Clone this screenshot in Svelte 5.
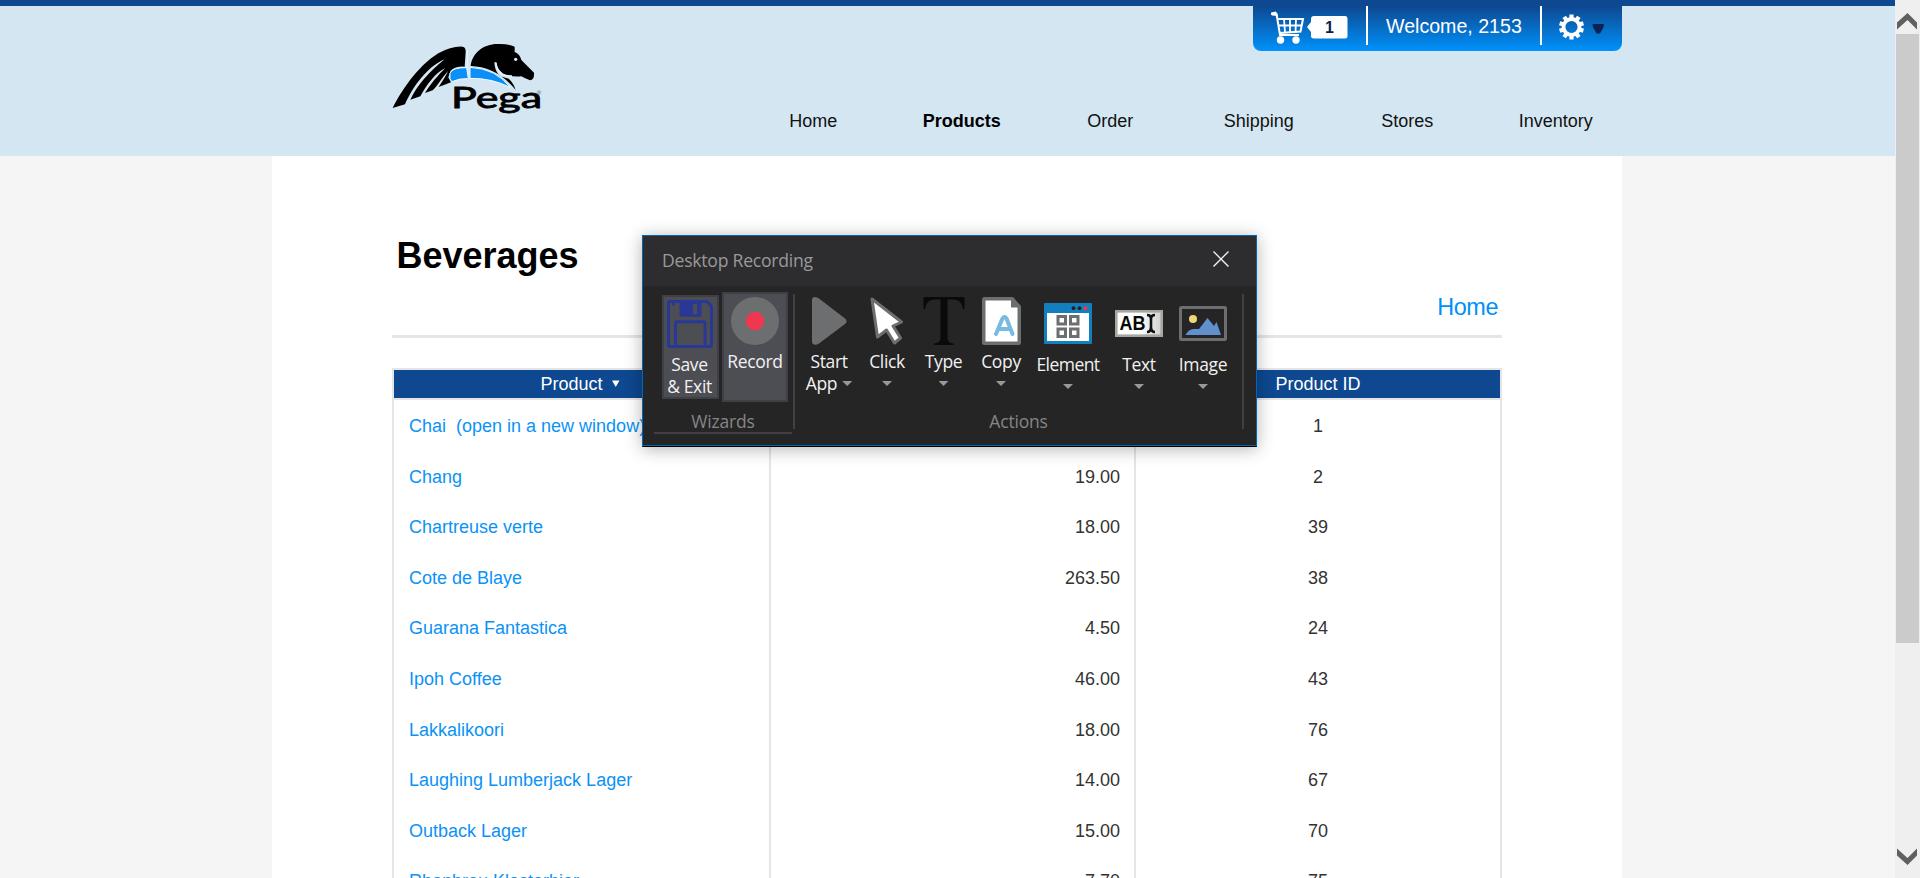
<script>
  const nav = ['Home', 'Products', 'Order', 'Shipping', 'Stores', 'Inventory'];
  const products = [
    ['Chai\u00a0 (open in a new window)', '18.00', '1'],
    ['Chang', '19.00', '2'],
    ['Chartreuse verte', '18.00', '39'],
    ['Cote de Blaye', '263.50', '38'],
    ['Guarana Fantastica', '4.50', '24'],
    ['Ipoh Coffee', '46.00', '43'],
    ['Lakkalikoori', '18.00', '76'],
    ['Laughing Lumberjack Lager', '14.00', '67'],
    ['Outback Lager', '15.00', '70'],
    ['Rhonbrau Klosterbier', '7.70', '75']
  ];
  const teeth = [0, 36, 72, 108, 144, 180, 216, 252, 288, 324];
</script>

<div class="screen">
  <div class="page">
    <header>
      <div class="inner">
        <div class="brand">
          <svg class="logo" width="180" height="100" viewBox="0 0 540 300">
            <path d="M38 234C60 190 110 110 175 70Q215 48 248 50Q258 52 257 66L254 110Q228 108 212 122L205 142L213 157L176 171C184 158 196 142 204 124C188 140 170 172 158 181L135 189C150 164 175 134 196 114C164 130 140 165 121 199L91 209C110 168 150 122 194 88C140 112 100 168 75 223Z" />
            <path d="M272 108C276 70 310 42 352 42Q385 41 404 50L404 66Q420 72 424 90L462 128Q464 148 450 151Q436 146 424 139Q396 142 370 131Q352 120 348 97L343 97Q344 122 358 136Q370 144 386 146Q400 158 407 180Q350 110 272 108Z" />
            <path d="M348 98Q350 122 366 132Q376 138 396 138" fill="none" stroke="#e8f3fa" stroke-width="4" />
            <path d="M262 60V144" stroke="#e8f3fa" stroke-width="4" />
            <path d="M210 130Q216 112 260 113L265 146Q240 144 215 155Q207 148 210 130ZM270 112Q350 116 390 172Q335 144 270 145Z" fill="#0b90f8" stroke="#f4fbff" stroke-width="3" />
            <circle cx="407" cy="88" r="5" fill="#d4e6f2" />
            <text x="213" y="234" textLength="273" lengthAdjust="spacingAndGlyphs" font-family="Lato, sans-serif" font-size="86" stroke="#000" stroke-width="2.500">Pega</text>
            <text x="470" y="195" font-family="Liberation Sans, sans-serif" font-size="18" fill="#555">®</text>
          </svg>
        </div>
        <div class="right">
          <div class="account">
            <div class="cart">
              <svg width="80" height="36" viewBox="0 0 80 36">
                <g fill="none" stroke="#fff" stroke-width="2">
                  <path d="M0 4H5.5L9 25H28M6.5 9H32L29.5 21.5L9 23" />
                  <path d="M13 9L14 22M19 9V22M25 9L24.500 22M7.500 15.500H30.500" stroke-width="1.800" />
                </g>
                <path d="M0 2.500L5 1.500L7 6L1 5.500Z" fill="#fff" />
                <circle cx="9.500" cy="30" r="3.700" fill="#fff" /><circle cx="25" cy="30" r="3.700" fill="#fff" />
                <path d="M36 17L40 12V9Q40 6 43 6H74Q76.500 6 76.500 9V26Q76.500 28.500 74 28.500H43Q40 28.500 40 26V22Z" fill="#fff" />
                <text x="54" y="22.700" font-family="Liberation Sans, sans-serif" font-size="16" font-weight="700" fill="#0b1f48">1</text>
              </svg>
            </div>
            <div class="welcome">Welcome, 2153</div>
            <div class="settings">
              <svg width="52" height="36" viewBox="0 0 52 36">
                <circle cx="16.500" cy="17" r="8" fill="none" stroke="#fff" stroke-width="3.800" />
                {#each teeth as a}
                  <path d="M14.400 8V4.500H18.600V8Z" fill="#fff" transform="rotate({a} 16.500 17)" />
                {/each}
                <path d="M37.500 14H49L48.500 17L45 23.500H41.500L38 17Z" fill="#0b2354" />
              </svg>
            </div>
          </div>
          <nav>
            {#each nav as item}
              <a href="#top" class:active={item === 'Products'}>{item}</a>
            {/each}
          </nav>
        </div>
      </div>
    </header>

    <main>
      <h1>Beverages</h1>
      <div class="crumb"><a href="#top">Home</a></div>
      <div class="table">
        <div class="row head">
          <span>Product <svg width="8" height="7" viewBox="0 0 8 7"><path d="M0 .5H7.500L3.750 7Z" fill="#fff" /></svg></span>
          <span>Unit Price</span>
          <span>Product ID</span>
        </div>
        {#each products as [name, price, id]}
          <div class="row">
            <span class="name"><a href="#top">{name}</a></span>
            <span class="price">{price}</span>
            <span class="id">{id}</span>
          </div>
        {/each}
      </div>
    </main>
  </div>

  <div class="scrollbar">
    <svg width="25" height="34" viewBox="0 0 25 34"><path d="M2 22.500L12.500 13L22 22.500V29.500L12.500 20L2 29.500Z" fill="#606060" /></svg>
    <div class="thumb"></div>
    <svg class="down" width="25" height="34" viewBox="0 0 25 34"><path d="M2 4.500L12.500 14L22 4.500V11.500L12.500 21L2 11.500Z" fill="#606060" /></svg>
  </div>

  <section class="dialog">
    <div class="title">
      <span>Desktop Recording</span>
      <svg width="16" height="16" viewBox="0 0 16 16"><path d="M.5 .5L15.500 15.500M15.500 .5L.5 15.500" stroke="#f1f1f1" stroke-width="1.400" /></svg>
    </div>
    <div class="groups">
      <div class="wizards">
        <div class="buttons">
          <div class="btn save">
            <svg width="46" height="48" viewBox="1 0.500 46 48.500" preserveAspectRatio="none">
              <path d="M3 2H41L45.500 7V46.500Q45.500 47.500 44 47.500H4Q2.500 47.500 2.500 46.500V3Q2.500 2 4 2Z" fill="none" stroke="#293895" stroke-width="3" />
              <path d="M13.500 1H35.500V17.500H13.500ZM27 4.500V15H31V4.500Z" fill="#293895" fill-rule="evenodd" />
              <path d="M9.500 47V24Q9.500 22.500 11 22.500H37.500Q39 22.500 39 24V47" fill="none" stroke="#293895" stroke-width="3" />
              <circle cx="7.500" cy="4.500" r="1.700" fill="#293895" />
            </svg>
            <b>Save<br />&amp; Exit</b>
          </div>
          <div class="btn record">
            <svg width="48" height="48" viewBox="0 0 48 48"><circle cx="24" cy="24" r="24" fill="#6d6e70" /><circle cx="24" cy="24" r="9.200" fill="#ef3850" /></svg>
            <b>Record</b>
          </div>
        </div>
        <div class="caption">Wizards</div>
      </div>
      <div class="actions">
        <div class="tools">
          <div class="tool start">
            <svg width="35" height="48" viewBox="0 0 35 48"><path d="M0 3Q0 0 3 0Q5 0 7 1.500L33 21.500Q36 24 33 27L7 46.500Q4 48.500 2 47.500Q0 46.500 0 45Z" fill="#6d6e70" /></svg>
            <b>Start<br />App<i></i></b>
          </div>
          <div class="tool click">
            <svg width="34" height="48" viewBox="0 0 34 48"><path d="M2 2L31.500 25L23 29L30.500 41L24.500 46L16.500 33L7.500 40Z" fill="#fff" stroke="#6d6e70" stroke-width="3" stroke-linejoin="round" /></svg>
            <b>Click</b><i></i>
          </div>
          <div class="tool type">
            <svg width="42" height="48" viewBox="0 0 42 48"><path d="M.5 0H41.500V12H40Q39 3 31 2.500H24.500V41Q24.500 46 30.500 46.500V48H11V46.500Q17.500 46 17.500 41V2.500H11Q3 3 2 12H.5Z" fill="#090b0b" /></svg>
            <b>Type</b><i></i>
          </div>
          <div class="tool copy">
            <svg width="39" height="48" viewBox="0 0 39 48"><path d="M2.500 0H31L39 9V45.500Q39 48 36.500 48H2.500Q0 48 0 45.500V2.500Q0 0 2.500 0Z" fill="#6d6e70" /><path d="M3.500 3.500H29V10.500H35.500V44.500H3.500Z" fill="#fff" /><path d="M14 37L20.500 21.500Q22.500 18.500 24.500 21.500L30.500 37M17.500 32H27.500" fill="none" stroke="#77bbe2" stroke-width="4" stroke-linecap="round" /></svg>
            <b>Copy</b><i></i>
          </div>
          <div class="tool low element">
            <svg width="48" height="41" viewBox="0 0 48 41"><rect width="48" height="41" rx="1" fill="#1380bd" /><path d="M3 10H45V38H3Z" fill="#fff" /><circle cx="29.500" cy="5.200" r="1.900" fill="#222" /><circle cx="35.500" cy="5.200" r="1.900" fill="#222" /><circle cx="41.500" cy="5.200" r="2" fill="#ef3850" /><path d="M14 13.500H21.500V21H14ZM26.500 13.500H34V21H26.500ZM14 26H21.500V33.500H14ZM26.500 26H34V33.500H26.500Z" fill="none" stroke="#6d6e70" stroke-width="3" /></svg>
            <b>Element</b><i></i>
          </div>
          <div class="tool low text">
            <svg width="48" height="41" viewBox="0 0 48 41"><defs><linearGradient id="field"><stop offset=".5" stop-color="#fff" /><stop offset="1" stop-color="#d0d0d0" /></linearGradient></defs><rect x="1.300" y="8.300" width="45.400" height="24.400" fill="url(#field)" stroke="#a6a79e" stroke-width="2.600" /><text x="4.500" y="27" textLength="26" lengthAdjust="spacingAndGlyphs" font-family="Liberation Sans, sans-serif" font-size="20" font-weight="700" fill="#080808">AB</text><path d="M32 12Q36 12 36 16V24Q36 29 32 29M40 12Q36 12 36 16M36 24Q36 29 40 29" fill="none" stroke="#111" stroke-width="2.600" /></svg>
            <b>Text</b><i></i>
          </div>
          <div class="tool low image">
            <svg width="48" height="41" viewBox="0 0 48 41"><rect x="1.500" y="4.500" width="45" height="32" rx="1" fill="#252526" stroke="#6d6e70" stroke-width="3" /><circle cx="14" cy="16" r="4" fill="#efd677" /><path d="M6.500 32Q10 25.500 15 26L20 26L28.500 15L35 23L37.500 19L42 32Z" fill="#6190cf" /></svg>
            <b>Image</b><i></i>
          </div>
        </div>
        <div class="caption">Actions</div>
      </div>
    </div>
  </section>
</div>

<style>
  :global(body) { margin: 0; overflow: hidden; }
  .screen { position: relative; display: flex; width: 1920px; height: 878px; overflow: hidden; background: #f5f5f5; font-family: "Liberation Sans", Arial, sans-serif; font-size: 18px; }
  .screen * { box-sizing: border-box; }
  svg { display: block; flex: none; }
  a { color: inherit; text-decoration: none; }
  .page { width: 1895px; height: 878px; overflow: hidden; }
  header { height: 156px; background: #d4e6f2; border-top: 6px solid #0d4890; }
  .inner { display: flex; width: 1358px; margin-left: 272px; }
  .brand { width: 467px; padding: 24px 0 0 108px; }
  .right { width: 891px; }
  .account { display: flex; width: 369px; height: 45px; margin-left: 514px; border-radius: 0 0 8px 8px; background: linear-gradient(#0d4890, #0092fb); color: #fff; }
  .cart { width: 115px; height: 39px; padding: 4px 0 0 18px; border-right: 2px solid #fff; }
  .welcome { width: 174px; height: 39px; padding-left: 18px; border-right: 2px solid #fff; font-size: 19.600px; line-height: 40px; white-space: nowrap; }
  .settings { padding: 4px 0 0 13px; }
  nav { display: grid; grid-template-columns: repeat(6, 148.500px); margin-top: 60px; text-align: center; line-height: 21px; color: #111; }
  .active { font-weight: 700; color: #000; }
  main { width: 1350px; height: 722px; margin-left: 272px; padding: 79px 120px 0; background: #fff; overflow: hidden; }
  h1 { margin: 0; padding-left: 4.500px; font-size: 36px; line-height: 41px; }
  .crumb { height: 62px; padding: 17px 4px 0 0; border-bottom: 3px solid #e5e5e5; text-align: right; color: #0090f8; font-size: 23.400px; letter-spacing: -.4px; line-height: 28px; }
  .table { margin-top: 30px; border: 2px solid #e5e5e5; }
  .row { display: grid; grid-template-columns: 375px 365px 366px; height: 50.600px; color: #333; line-height: 52px; }
  .row span + span { border-left: 2px solid #e5e5e5; }
  .row span { height: 50.600px; }
  .row.head { height: 30px; border-bottom: 2px solid #e5e5e5; background: #0d4890; color: #fff; line-height: 28px; text-align: center; }
  .row.head span { height: 28px; }
  .row.head span:first-child { padding-right: 3px; }
  .row.head span + span { border-color: #0d4890; }
  .head svg { display: inline-block; margin: 0 0 3px 4px; }
  .name { padding-left: 15px; color: #0b92f6; white-space: pre; }
  .price { padding-right: 14px; text-align: right; }
  .id { text-align: center; }
  .scrollbar { display: flex; flex-direction: column; width: 25px; height: 878px; background: #efefef; }
  .thumb { width: 23px; height: 609px; margin-left: 1px; background: #cbcbcb; }
  .down { margin-top: auto; }
  .dialog { position: absolute; left: 642px; top: 235px; width: 615px; height: 212px; border: 1px solid #0067b0; border-bottom-color: #000; background: #252526; box-shadow: 0 2px 16px rgba(0, 0, 0, .3), inset 0 -1px #0067b0; font-family: "Open Sans", "Noto Sans", sans-serif; color: #f1f1f1; }
  .title { display: flex; justify-content: space-between; height: 50px; padding: 15px 27px 0 19px; background: #2d2d30; color: #999; font-size: 17.600px; line-height: 19px; letter-spacing: -.24px; }
  .groups { display: flex; padding-top: 6px; }
  .wizards { width: 152px; height: 143px; border-right: 2px solid transparent; border-image: linear-gradient(transparent 3px, #3f3f46 3px, #3f3f46 136px, transparent 136px) 1; }
  .buttons { display: flex; align-items: flex-start; gap: 3px; height: 110px; padding-left: 19px; }
  .btn { display: flex; flex-direction: column; align-items: center; border: 2px solid #3f3f46; background: #4d4d54; }
  b { font-weight: 400; font-size: 17.500px; line-height: 22px; letter-spacing: -.35px; text-align: center; white-space: nowrap; }
  .save { width: 57px; height: 104px; margin-top: 3px; padding: 3px 2px 0 0; }
  .save b { margin-top: 5px; }
  .record { width: 66px; height: 110px; padding-top: 3px; }
  .record b { margin-top: 5px; }
  .caption { color: #858585; font-size: 17.500px; line-height: 24px; letter-spacing: -.2px; text-align: center; }
  .wizards .caption { width: 138px; height: 32px; margin-left: 11px; padding-top: 7px; border-bottom: 2px solid #3f3f46; }
  .actions { width: 449px; height: 143px; border-right: 2px solid; border-image: linear-gradient(transparent 3px, #3f3f46 3px, #3f3f46 136px, transparent 136px) 1; }
  .tools { display: grid; grid-template-columns: 58px 58px 55px 60px 74px 68px 60px; height: 110px; padding-left: 5px; }
  .tool { display: flex; flex-direction: column; align-items: center; padding-top: 5px; }
  .tool b { margin-top: 5px; }
  .tool.low { padding-top: 11px; }
  .tool.low b { margin-top: 9px; }
  i { display: block; width: 10px; height: 5px; margin-top: 9px; background: #999; clip-path: polygon(0 0, 100% 0, 50% 100%); }
  .element b { letter-spacing: -.55px; }
  .start i { display: inline-block; margin: 0 0 4px 5px; }
  .actions .caption { padding: 7px 0 0 0; }
</style>
